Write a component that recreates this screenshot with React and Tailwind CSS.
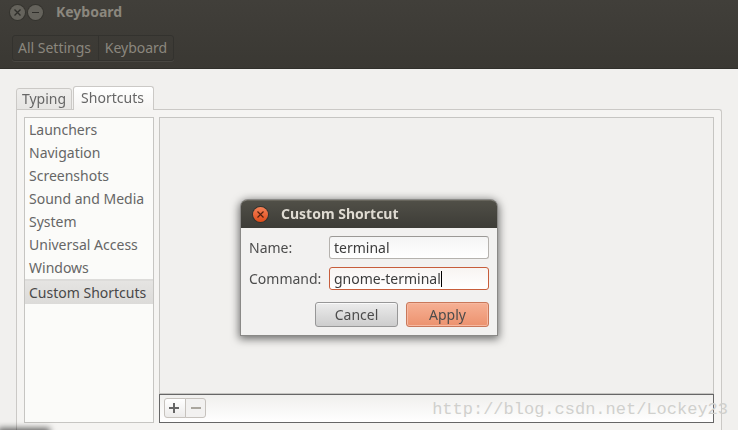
import { useState } from 'react';

const sections = [
    'Launchers',
    'Navigation',
    'Screenshots',
    'Sound and Media',
    'System',
    'Universal Access',
    'Windows',
];

function TitleBar() {
    return (
        <header className="h-[69px] px-2 bg-linear-to-b from-[#413f3a] to-[#3a3833] border-b border-[#302f2b] text-[#8b877e]">
            <div className="flex items-center h-6">
                <button type="button" aria-label="Close" className="ml-0.5 w-[15px] h-[15px] rounded-full bg-[#65635c] shadow-[0_0_0_1px_#35342f]">
                    <svg viewBox="0 0 15 15" className="w-full h-full" stroke="#2f2e2a" strokeWidth="1.4">
                        <path d="M4.5 4.5l6 6M10.5 4.5l-6 6" />
                    </svg>
                </button>
                <button type="button" aria-label="Minimize" className="ml-[3px] w-[15px] h-[15px] rounded-full bg-[#65635c] shadow-[0_0_0_1px_#35342f]">
                    <svg viewBox="0 0 15 15" className="w-full h-full" stroke="#2f2e2a">
                        <path d="M4 7.5h7" />
                    </svg>
                </button>
                <h1 className="ml-[13px] font-bold">Keyboard</h1>
            </div>
            <nav className="flex w-max mt-[11px] ml-1 h-[26px] border border-[#33322e] rounded-[3px] shadow-[0_1px_0_#494742]">
                <button type="button" className="w-[86px] pr-0.5 border-r border-[#33322e]">
                    All Settings
                </button>
                <button type="button" className="w-[74px]">
                    Keyboard
                </button>
            </nav>
        </header>
    );
}

function CustomShortcutDialog() {
    const [name, setName] = useState('terminal');
    const [command, setCommand] = useState('gnome-terminal');

    return (
        <div className="fixed inset-0 flex justify-center items-start pt-[200px]">
            <form
                role="dialog"
                aria-label="Custom Shortcut"
                onSubmit={(e) => e.preventDefault()}
                className="w-64 bg-[#f2f1f0] rounded-t-[7px] text-[#4c4c4c] shadow-[0_0_0_1px_#8a8987,0_2px_8px_2px_rgba(0,0,0,0.55)]"
            >
                <div className="flex items-center h-7 px-3 rounded-t-[6px] bg-linear-to-b from-[#504f47] to-[#3d3c37] border-t border-[#67655c]">
                    <button type="button" aria-label="Close dialog" className="w-[15px] h-[15px] rounded-full bg-linear-to-b from-[#f48055] to-[#df4b16] shadow-[0_0_0_1px_#34332e]">
                        <svg viewBox="0 0 15 15" className="w-full h-full" stroke="#53210f" strokeWidth="1.2">
                            <path d="M4.5 4.5l6 6M10.5 4.5l-6 6" />
                        </svg>
                    </button>
                    <h2 className="ml-[13px] pb-0.5 font-bold text-[#dfdbd2]">Custom Shortcut</h2>
                </div>

                <div className="grid grid-cols-[80px_1fr] gap-y-2 items-center p-2">
                    <label htmlFor="name">Name:</label>
                    <div className="flex items-center h-[23px] px-1 bg-linear-to-b from-[#f5f5f5] to-white border border-[#b5b2ae] border-t-[#9b9996] rounded-[3px]">
                        <input
                            id="name"
                            value={name}
                            onChange={(e) => setName(e.target.value)}
                            className="w-full text-[#3c3c3c] outline-none"
                        />
                    </div>
                    <label htmlFor="command">Command:</label>
                    <div className="flex items-center h-[23px] px-1 bg-linear-to-b from-[#f8f4f2] to-white border border-[#c75d3b] rounded-[3px]">
                        <input
                            id="command"
                            value={command}
                            onChange={(e) => setCommand(e.target.value)}
                            className="field-sizing-content max-w-full text-[#3c3c3c] outline-none"
                        />
                        <span className="w-px h-4 bg-black" />
                    </div>
                </div>

                <div className="flex justify-end gap-2 px-2 pt-1 pb-2">
                    <button type="button" className="w-[83px] h-[25px] rounded-[3px] border border-[#979797] bg-linear-to-b from-[#ececec] to-[#cdcdcd] shadow-[inset_0_1px_0_#fafafa]">
                        Cancel
                    </button>
                    <button type="submit" className="w-[83px] h-[25px] rounded-[3px] border border-[#c9785a] bg-linear-to-b from-[#f6b094] to-[#ec926e] shadow-[inset_0_0_0_1px_#f6b9a1]">
                        Apply
                    </button>
                </div>
            </form>
        </div>
    );
}

function App() {
    return (
        <div className="relative flex flex-col h-screen overflow-hidden bg-[#f1f0ee] text-[#666] text-[14px] leading-5 font-['Noto_Sans','Open_Sans',sans-serif]">
            <TitleBar />

            <main className="flex flex-col flex-1 min-h-0 px-4 pt-[17px]">
                <div role="tablist" className="relative z-10 flex items-end gap-px -mb-px">
                    <button type="button" role="tab" aria-selected="false" className="w-14 h-[22px] bg-linear-to-b from-[#efeeec] to-[#e6e5e3] border border-[#cbc9c6] rounded-t-[3px]">
                        Typing
                    </button>
                    <button type="button" role="tab" aria-selected="true" className="w-[81px] h-6 pr-0.5 pb-0.5 bg-linear-to-b from-white to-[#f5f4f2] border border-b-0 border-[#cbc9c6] rounded-t-[3px]">
                        Shortcuts
                    </button>
                </div>

                <div className="flex flex-1 min-h-0 gap-[5px] px-[7px] py-[7px] bg-[#f5f4f2] border border-b-0 border-[#cbc9c6] rounded-tr-[3px]">
                    <ul className="w-[130px] bg-[#fbfbf9] border border-[#c6c5c2]">
                        {sections.map((section) => (
                            <li key={section} className="h-[23px] px-1 leading-[23px] whitespace-nowrap">
                                {section}
                            </li>
                        ))}
                        <li className="h-[25px] px-1 border-t-2 border-[#dddcda] bg-linear-to-b from-[#e5e4e2] to-[#dcdbd9] leading-[23px] text-[#484848] whitespace-nowrap">
                            Custom Shortcuts
                        </li>
                    </ul>

                    <section className="flex flex-col flex-1">
                        <div className="flex-1 border border-[#c6c5c2] bg-[#f1f0ee]" />
                        <div className="flex items-center h-[29px] px-1 pb-px border border-[#666] bg-linear-to-b from-[#f0efed] to-white">
                            <button type="button" aria-label="Add shortcut" className="w-[22px] h-5 rounded-l-[3px] border border-[#c6c2bd] bg-linear-to-b from-white to-[#ecebea]">
                                <svg viewBox="0 0 20 18" className="w-full h-full" fill="#666">
                                    <path d="M4 8h10v2H4zM8 4h2v10H8z" />
                                </svg>
                            </button>
                            <button type="button" aria-label="Remove shortcut" className="-ml-px w-[21px] h-5 rounded-r-[3px] border border-[#c6c2bd] bg-[#f2f1f0]">
                                <svg viewBox="0 0 19 18" className="w-full h-full" fill="#aaa69e">
                                    <path d="M5 8h10v2H5z" />
                                </svg>
                            </button>
                        </div>
                    </section>
                </div>
            </main>

            {/* edge of the window below */}
            <div className="absolute left-0 top-full w-12 h-4 shadow-[0_0_6px_2px_rgba(0,0,0,0.6)]" />

            <p className="absolute right-[10px] bottom-2 text-[17px] leading-6 text-[#d0d0cd] font-['Liberation_Mono',monospace]">
                http://blog.csdn.net/Lockey23
            </p>

            <CustomShortcutDialog />
        </div>
    );
}

export default App;
